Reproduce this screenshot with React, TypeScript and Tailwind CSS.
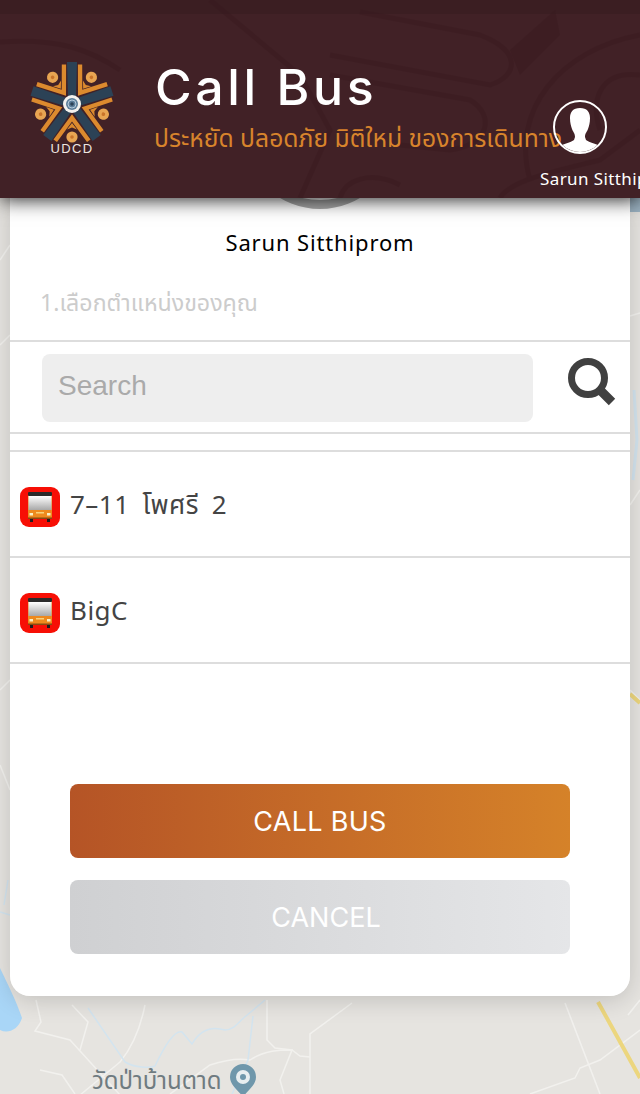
const thai = "font-['Noto_Sans','Noto_Sans_Thai','DejaVu_Sans',sans-serif]";

function MapBackdrop() {
  return (
    <svg className="absolute inset-0 blur-[0.6px]" width="640" height="1094" viewBox="0 0 640 1094" fill="none">
      <rect width="640" height="1094" fill="#e6e4e0" />
      <g stroke="#f2f1ee" strokeWidth="1.5">
        <path d="M0 260 L10 245 M0 345 L10 335 M0 690 L10 680 M0 765 L10 790" />
        <path d="M630 316 L640 313 M630 505 L640 490 M630 690 L640 700" />
        <path d="M36 1000 L41 1022 L35 1031 L70 1040 L120 1095" />
        <path d="M145 1005 C140 1030 130 1050 120 1062 L62 1110" />
        <path d="M72 1005 L88 1022 L80 1050" />
        <path d="M267 1000 L267 1040 L275 1048 L292 1050 L300 1056 L310 1057" />
        <path d="M352 1003 L310 1034 L310 1094" />
        <path d="M170 1094 L210 1065 C225 1060 240 1058 250 1060 C265 1050 280 1050 292 1050 L280 1080 L284 1094" />
        <path d="M40 1070 L62 1075 L75 1094" />
        <path d="M565 1003 L600 1094" />
        <path d="M530 1094 L575 1078 L580 1068 L600 1060 L640 1030" />
        <path d="M628 1015 L640 1000" />
      </g>
      <g stroke="#d3e4ef" strokeWidth="1.5">
        <path d="M88 1008 L125 1062 C135 1068 150 1068 155 1066 C165 1045 175 1030 182 1032 L192 1044 C200 1030 212 1026 225 1030 C235 1030 240 1020 246 1016 L265 1000" />
        <path d="M253 1016 L248 1060 L232 1094" />
        <path d="M634 390 L637 440 L633 480" strokeWidth="3" />
        <path d="M0 912 L10 915 M8 880 L4 905" />
      </g>
      <path d="M0 968 C8 985 16 1000 22 1018 C18 1030 8 1034 0 1030 Z" fill="#a9d6f7" />
      <path d="M598 1002 L640 1078 M630 694 L640 703" stroke="#ecd67e" strokeWidth="4" />
      <path d="M630 198 H640 V212 H630Z" fill="#9fb6c6" />
      <path d="M243 1064 a13 13 0 0 1 13 13 c0 8 -8 13 -13 20 c-5 -7 -13 -12 -13 -20 a13 13 0 0 1 13 -13z" fill="#6f97ab" />
      <circle cx="243" cy="1077" r="7" fill="#e8eef0" />
      <circle cx="243" cy="1077" r="3" fill="#6f97ab" />
    </svg>
  );
}

function HeaderPattern() {
  return (
    <svg className="absolute inset-0" width="640" height="198" viewBox="0 0 640 198" fill="none">
      <path d="M0 0H640V14H0Z" fill="#351a20" opacity="0.45" />
      <g stroke="#38191e" strokeWidth="5" opacity="0.4">
        <path d="M210 0 L300 75 L330 130 L300 198" />
        <path d="M360 12 L480 35 C520 50 520 75 490 85 L330 55" />
        <path d="M330 75 L470 100 C495 115 490 145 450 150 L400 145" />
        <path d="M500 198 C510 180 560 170 600 160 L640 130" />
        <path d="M640 35 C560 50 510 110 530 180" />
        <path d="M640 75 C600 70 590 100 600 130" />
        <path d="M0 42 C60 38 90 50 120 70" />
        <path d="M340 198 C345 180 370 170 400 185" />
      </g>
      <path d="M555 10 L510 50 L520 75 L560 35Z" fill="#38191e" opacity="0.4" />
    </svg>
  );
}

function Logo() {
  const arms = [0, 72, 144, 216, 288];
  return (
    <div className="relative w-[84px] h-[100px] shrink-0">
      <svg width="84" height="84" viewBox="-42 -43 84 84" fill="none">
        {arms.map((deg) => (
          <g key={deg} transform={`rotate(${deg + 36})`}>
            <path d="M0 -10.2 L-18.5 -35.5 L-15 -38 L0 -17.5 L15 -38 L18.5 -35.5Z" fill="#dc8a2e" />
            <path d="M0 -19 L-5 -25.5 L0 -23.5 L5 -25.5Z" fill="#dc8a2e" />
            <circle cy="-33" r="5.6" fill="#e8a552" />
            <circle cy="-33" r="1.8" fill="#c9742a" />
          </g>
        ))}
        {arms.map((deg) => (
          <path key={deg} d="M-4 -7 L-5 -42 H5 L4 -7Z" fill="#2c4256" transform={`rotate(${deg})`} />
        ))}
        <circle r="9" fill="#f4f2ee" />
        <circle r="6" fill="#5d7f9a" />
        <circle r="4" fill="none" stroke="#b6cbdb" strokeWidth="1" />
        <circle r="1.8" fill="#2c4256" />
      </svg>
      <span className="absolute left-0 right-0 top-[78px] text-center text-[13px] leading-[20px] tracking-[1.4px] text-[#eee6e0] font-['Liberation_Sans',sans-serif]">
        UDCD
      </span>
    </div>
  );
}

function BusIcon() {
  return (
    <div className="mt-[6px] w-10 h-10 shrink-0 rounded-[9px] bg-[#f70f05] flex items-center justify-center">
      <svg width="24" height="30" viewBox="0 0 24 30">
        <defs>
          <linearGradient id="glass" x1="0" y1="0" x2="0" y2="1">
            <stop offset="0" stopColor="#ffffff" />
            <stop offset="1" stopColor="#a8a8a8" />
          </linearGradient>
        </defs>
        <rect x="2" y="27" width="3" height="3" fill="#1e1e1e" />
        <rect x="19" y="27" width="3" height="3" fill="#1e1e1e" />
        <rect x="0" y="0" width="24" height="27" rx="2" fill="#ee8a1e" />
        <rect x="0" y="0" width="24" height="4" rx="1" fill="#2a2a2a" />
        <rect x="0.5" y="4" width="23" height="14" fill="url(#glass)" />
        <rect x="1.5" y="21" width="3.5" height="2.5" fill="#f8f1c8" />
        <rect x="19" y="21" width="3.5" height="2.5" fill="#f8f1c8" />
        <rect x="8" y="20" width="8" height="1.5" fill="#f8d27a" />
        <rect x="0" y="25.5" width="24" height="1.5" fill="#8a4a12" />
      </svg>
    </div>
  );
}

function PlaceRow({ name }: { name: string }) {
  return (
    <div className="h-[106px] border-b-2 border-[#dddddd] flex items-center gap-[10px] pl-[10px]">
      <BusIcon />
      <span className={`text-[26px] text-[#444444] tracking-[0.5px] [word-spacing:5.5px] ${thai}`}>{name}</span>
    </div>
  );
}

export default function App() {
  return (
    <div className="relative w-[640px] h-[1094px] overflow-hidden bg-[#e6e4e0]">
      <MapBackdrop />

      <header className="relative z-10 h-[198px] bg-[#412126] shadow-[0_2px_18px_rgba(0,0,0,0.85)] flex overflow-hidden">
        <HeaderPattern />
        <div className="relative w-[154px] shrink-0 pl-[30px] pt-[61px]">
          <Logo />
        </div>
        <div className="relative w-[386px] shrink-0 whitespace-nowrap">
          <h1 className="mt-[54px] ml-px text-[50px] leading-[66px] font-medium tracking-[3.6px] text-white font-['Inter',sans-serif]">
            Call Bus
          </h1>
          <p className={`text-[24.7px] leading-[36px] text-[#d8842c] ${thai}`}>
            ประหยัด ปลอดภัย มิติใหม่ ของการเดินทาง
          </p>
        </div>
        <div className="relative w-[100px] shrink-0 pt-[100px]">
          <div className="ml-[13px] w-[54px] h-[54px] rounded-full border-2 border-white overflow-hidden">
            <svg width="50" height="50" viewBox="0 0 50 50" fill="white">
              <path d="M25 6c7 0 10 4 10 10 0 5-1 8-2 11-1 3-3 4-3 8l1 3c4 3 12 4 15 7v5H4v-5c3-3 11-4 15-7l1-3c0-4-2-5-3-8-1-3-2-6-2-11 0-6 3-10 10-10z" />
            </svg>
          </div>
          <p className={`mt-[15px] text-[17px] leading-[20px] text-white whitespace-nowrap tracking-[0.4px] ${thai}`}>
            Sarun Sitthiprom
          </p>
        </div>
      </header>

      <main className="relative px-[10px]">
        <div className="absolute left-[10px] right-[10px] top-0 h-[798px] rounded-b-[20px] shadow-[0_4px_24px_rgba(0,0,0,0.16)]" />
        <div className="relative bg-white rounded-b-[20px] h-[798px] overflow-hidden">
          <div className="absolute left-[232px] top-[-145px] w-[156px] h-[156px] rounded-full border-[9px] border-[#a8a8a8]" />
          <div className="h-[144px] border-b-2 border-[#dddddd]">
            <p className={`pt-[28px] text-center text-[22px] leading-[32px] text-black tracking-[0.85px] ${thai}`}>
              Sarun Sitthiprom
            </p>
            <p className={`mt-[28px] pl-[30px] text-[23.2px] leading-[32px] text-[#cccccc] ${thai}`}>
              1.เลือกตำแหน่งของคุณ
            </p>
          </div>

          <div className="h-[92px] border-b-2 border-[#dddddd] flex items-center pl-[32px] pt-[2px]">
            <div className="w-[491px] h-[68px] rounded-lg bg-[#eeeeee] pl-4 pb-1 flex items-center text-[28px] text-[#aaaaaa] font-['Liberation_Sans',sans-serif]">
              Search
            </div>
            <svg className="ml-[35px] mb-[10px]" width="50" height="50" viewBox="0 0 50 50" fill="none" stroke="#404040">
              <circle cx="20" cy="20" r="16.5" strokeWidth="7" />
              <path d="M31 31 L44 44" strokeWidth="9" />
            </svg>
          </div>

          <div className="h-[18px] border-b-2 border-[#dddddd]" />
          <PlaceRow name="7–11 โพศรี 2" />
          <PlaceRow name="BigC" />

          <div className="pt-[120px] px-[60px] flex flex-col gap-[22px] font-['Inter',sans-serif]">
            <button className="h-[74px] pt-[2px] rounded-lg bg-gradient-to-r from-[#b55426] to-[#d58229] text-white text-[27px] tracking-[0.3px]">
              CALL BUS
            </button>
            <button className="h-[74px] pt-[2px] rounded-lg bg-gradient-to-r from-[#cfd0d2] to-[#e5e6e8] text-white text-[27px] pl-3">
              CANCEL
            </button>
          </div>
        </div>
      </main>

      <span className={`absolute left-[92px] top-[1063px] text-[24px] leading-[34px] text-[#6f7b80] ${thai}`}>
        วัดป่าบ้านตาด
      </span>
    </div>
  );
}
